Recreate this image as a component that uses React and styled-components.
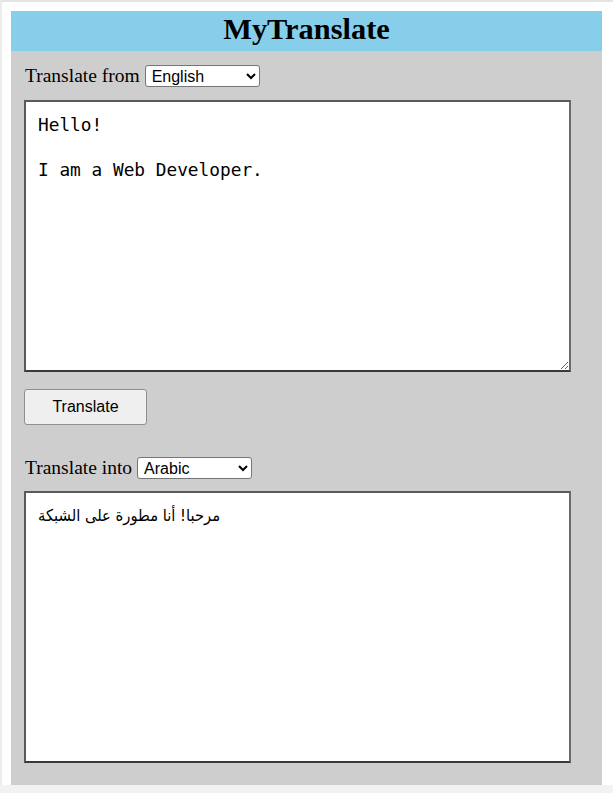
import React, { useState } from "react";
import styled, { createGlobalStyle } from "styled-components";

const Global = createGlobalStyle`
  html, body { margin: 0; padding: 0; background: #f1f2f3; }
  body { font-family: "Liberation Serif", "Times New Roman", serif; }
`;

const Page = styled.div`
  background: #ffffff;
  border-top: 2px solid #e4e4e4;
  border-left: 2px solid #ececec;
  padding: 9px 11px 0 9px;
`;

const Container = styled.div`
  width: 591px;
  display: flex;
  flex-direction: column;
  background: #cecece;
`;

const Header = styled.h1`
  margin: 0;
  height: 40px;
  line-height: 36px;
  background: #87ceeb;
  text-align: center;
  font-family: "Liberation Serif", "Times New Roman", serif;
  font-size: 30.4px;
  font-weight: bold;
  color: #000;
`;

const Panel = styled.div`
  display: flex;
  flex-direction: column;
  align-items: flex-start;
  padding: 14px 32px 22px 13px;
`;

const LangRow = styled.div`
  display: flex;
  align-items: center;
  gap: 5px;
  margin-top: ${(p) => p.$top || 0}px;
  height: 22px;
  padding-left: 1px;
  font-size: 19.5px;
  color: #000;
`;

const Select = styled.select`
  width: 115px;
  height: 22px;
  font-family: "Liberation Sans", Arial, sans-serif;
  font-size: 16px;
  color: #000;
  background: #fff;
  border: 1px solid #767676;
  border-radius: 3px;
  padding: 0 0 0 2px;
`;

const TextBox = styled.textarea`
  box-sizing: border-box;
  width: 547px;
  height: 272px;
  margin-top: ${(p) => (p.$mono ? 13 : 12)}px;
  padding: 12px 12px;
  border: 2px solid;
  border-color: #5a5a5a #6a6a6a #3a3a3a #5a5a5a;
  background: #fff;
  color: #000;
  font-family: ${(p) =>
    p.$mono
      ? '"DejaVu Sans Mono", "Liberation Mono", monospace'
      : '"DejaVu Sans Condensed", "DejaVu Sans", sans-serif'};
  font-size: ${(p) => (p.$mono ? "17.8px" : "16.4px")};
  line-height: ${(p) => (p.$mono ? "22.5px" : "22px")};
  resize: ${(p) => (p.$fixed ? "none" : "both")};
  outline: none;
`;

const Button = styled.button`
  margin-top: 17px;
  width: 123px;
  height: 36px;
  background: #efefef;
  border: 1px solid #8f8f8f;
  border-radius: 3px;
  font-family: "Liberation Sans", Arial, sans-serif;
  font-size: 16px;
  color: #000;
  cursor: pointer;
`;

export default function App() {
  const [from, setFrom] = useState("en");
  const [to, setTo] = useState("ar");
  const [src, setSrc] = useState("Hello!\n\nI am a Web Developer.");
  return (
    <>
      <Global />
      <Page>
        <Container>
          <Header>MyTranslate</Header>
          <Panel>
            <LangRow>
              <span>Translate from</span>
              <Select value={from} onChange={(e) => setFrom(e.target.value)}>
                <option value="en">English</option>
                <option value="ar">Arabic</option>
                <option value="fr">French</option>
              </Select>
            </LangRow>
            <TextBox $mono value={src} onChange={(e) => setSrc(e.target.value)} />
            <Button>Translate</Button>
            <LangRow $top={32}>
              <span>Translate into</span>
              <Select value={to} onChange={(e) => setTo(e.target.value)}>
                <option value="ar">Arabic</option>
                <option value="en">English</option>
                <option value="fr">French</option>
              </Select>
            </LangRow>
            <TextBox $fixed readOnly value="مرحبا! أنا مطورة على الشبكة" />
          </Panel>
        </Container>
      </Page>
    </>
  );
}
